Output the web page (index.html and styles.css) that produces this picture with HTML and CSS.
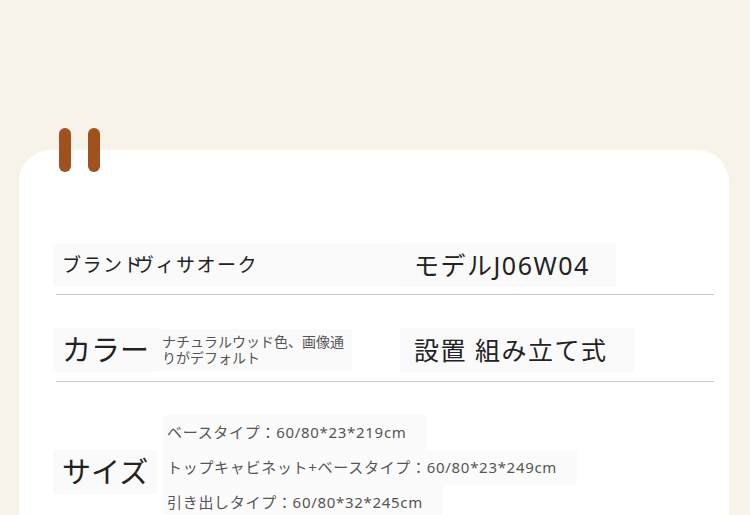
FILE: index.html
```html
<!DOCTYPE html>
<html lang="ja">
<head>
    <meta charset="UTF-8">
    <meta name="viewport" content="width=device-width, initial-scale=1.0">
    <title>商品仕様</title>
    <link rel="stylesheet" href="styles.css">
</head>
<body>

<div class="spec-card">
    <span class="clip clip-left"></span>
    <span class="clip clip-right"></span>

    <div class="spec-row row-brand">
        <div class="cell">
            <span class="txt-md">ブランド</span><span class="txt-md overlap">ヴィサオーク</span>
        </div>
        <div class="cell cell-right">
            <span class="txt-lg">モデルJ06W04</span>
        </div>
    </div>

    <div class="spec-row row-color">
        <div class="pair">
            <div class="cell"><span class="txt-xl">カラー</span></div>
            <div class="cell note">ナチュラルウッド色、画像通<br>りがデフォルト</div>
        </div>
        <div class="cell cell-right">
            <span class="txt-lg">設置 組み立て式</span>
        </div>
    </div>

    <div class="spec-row row-size">
        <div class="cell size-label"><span class="txt-xl">サイズ</span></div>
        <ul class="size-list">
            <li>ベースタイプ：60/80*23*219cm</li>
            <li>トップキャビネット+ベースタイプ：60/80*23*249cm</li>
            <li>引き出しタイプ：60/80*32*245cm</li>
        </ul>
    </div>
</div>

</body>
</html>
```

FILE: styles.css
```css
/* Halaman dasar */
body {
    margin: 0;
    background-color: #f8f3e9;
    font-family: "Noto Sans", "Noto Sans CJK JP", sans-serif;
    color: #222;
    height: 515px;
    overflow: hidden;
}

/* Kartu putih */
.spec-card {
    position: relative;
    margin: 150px 0 0 19px;
    width: 710px;
    height: 400px;
    background-color: #fff;
    border-radius: 32px 32px 0 0;
    padding: 85px 15px 0 37px;
    box-sizing: border-box;
}

/* Penjepit coklat */
.clip {
    position: absolute;
    top: -22px;
    width: 12px;
    height: 44px;
    border-radius: 6px;
    background-color: #a0511d;
}

.clip-left { left: 40px; }
.clip-right { left: 69px; }

/* Baris */
.spec-row {
    display: grid;
    grid-template-columns: 347px 1fr;
    align-items: center;
    border-bottom: 1px solid #c9c9c9;
}

.row-brand {
    height: 59px;
}

.row-color {
    padding: 33px 0 9px;
}

.row-size {
    grid-template-columns: 107px 1fr;
    border-bottom: none;
    padding-top: 33px;
}

.cell {
    display: inline-flex;
    align-items: center;
    background-color: #fafafa;
    padding: 4px 9px;
    margin-left: -3px;
    white-space: nowrap;
}

.cell-right {
    justify-self: start;
    padding: 4px 26px 4px 14px;
}

.size-label {
    justify-self: start;
    margin-top: 8px;
}

.pair {
    display: flex;
    align-items: center;
}

/* Teks */
.txt-md {
    font-size: 19px;
    line-height: 34px;
    letter-spacing: 1.5px;
}

.overlap {
    margin-left: -9px;
}

.txt-lg {
    font-size: 25px;
    line-height: 36px;
    letter-spacing: 1.5px;
}

.txt-xl {
    font-size: 29px;
    line-height: 36px;
}

.note {
    display: block;
    font-size: 14px;
    line-height: 16px;
    color: #555;
    padding: 5px 8px 5px 4px;
    margin-left: 0;
}

.size-list {
    list-style: none;
    margin: 0;
    padding: 0;
}

.size-list li {
    font-size: 15px;
    line-height: 35px;
    letter-spacing: 0.7px;
    color: #555;
    background-color: #fbfbfb;
    width: fit-content;
    padding: 0 20px 0 4px;
}
```
